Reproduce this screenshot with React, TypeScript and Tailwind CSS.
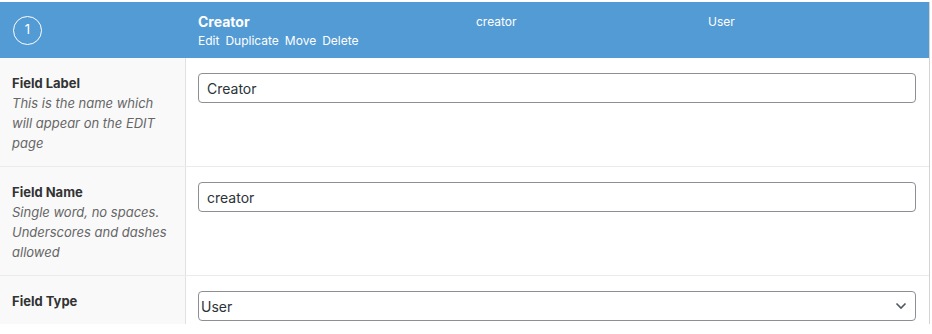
import React from "react";

const rows = [
  {
    label: "Field Label",
    description: "This is the name which will appear on the EDIT page",
    value: "Creator",
    kind: "input",
  },
  {
    label: "Field Name",
    description: "Single word, no spaces. Underscores and dashes allowed",
    value: "creator",
    kind: "input",
  },
  {
    label: "Field Type",
    description: "",
    value: "User",
    kind: "select",
  },
];

const FieldRow = ({ label, description, value, kind, first }: (typeof rows)[number] & { first?: boolean }) => {
  return (
    <div className={first ? "flex" : "flex border-t border-[#ebebeb]"}>
      <div className="w-[186px] shrink-0 border-r border-[#e1e1e1] bg-[#f9f9f9] pl-3 pr-3 pt-[15px] pb-[13px]">
        <div className="text-[13px] font-bold leading-[20px] text-[#333]">{label}</div>
        {description && (
          <p className="text-[13px] italic leading-[20px] text-[#666]">{description}</p>
        )}
      </div>
      <div className="flex-1 pl-3 pr-[13px] pt-[15px]">
        {kind === "select" ? (
          <div className="flex h-[30px] items-center justify-between rounded-[4px] border border-[#8c8f94] bg-white pl-[2px] pr-[8px] text-[14px] text-[#2c3338]">
            <span>{value}</span>
            <svg width="12" height="8" viewBox="0 0 12 8" fill="none">
              <path d="M1.5 1.5L6 6L10.5 1.5" stroke="#50575e" strokeWidth="1.6" />
            </svg>
          </div>
        ) : (
          <div className="flex h-[30px] items-center rounded-[4px] border border-[#8c8f94] bg-white px-2 text-[14px] text-[#2c3338]">
            {value}
          </div>
        )}
      </div>
    </div>
  );
};

export default function App() {
  return (
    <div
      className="h-[334px] w-[932px] overflow-hidden bg-white pt-[2px]"
      style={{ fontFamily: "Inter, 'Noto Sans', sans-serif" }}
    >
      <div className="w-[930px] border-r border-[#d4d4d4]">
        <div className="flex h-[56px] bg-[#539bd5] text-white">
          <div className="flex w-[186px] shrink-0 items-center pl-[13px]">
            <div className="flex h-[29px] w-[29px] items-center justify-center rounded-full border-[1.5px] border-white text-[13px]">
              1
            </div>
          </div>
          <div className="w-[290px] shrink-0 pl-3 pt-[10px]">
            <div className="text-[14px] font-bold leading-[20px]">Creator</div>
            <div className="mt-[1px] flex gap-[6px] text-[12px] leading-[16px]">
              <span>Edit</span>
              <span>Duplicate</span>
              <span>Move</span>
              <span>Delete</span>
            </div>
          </div>
          <div className="w-[232px] shrink-0 pt-[10px] text-[12px] leading-[20px]">creator</div>
          <div className="flex-1 pt-[10px] text-[12px] leading-[20px]">User</div>
        </div>
        {rows.map((row, i) => (
          <FieldRow key={row.label} {...row} first={i === 0} />
        ))}
      </div>
    </div>
  );
}
